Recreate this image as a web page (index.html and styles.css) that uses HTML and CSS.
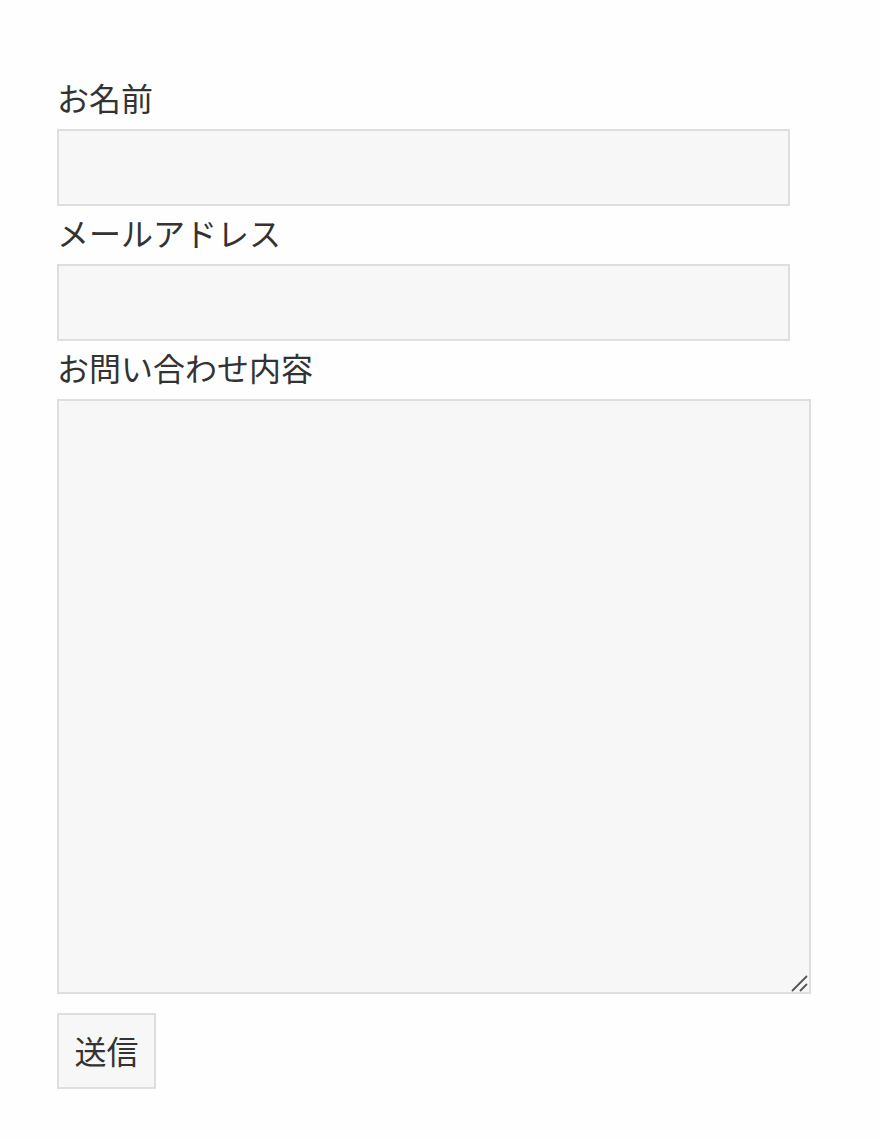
FILE: index.html
```html
<!DOCTYPE html>
<html lang="ja">
<head>
<meta charset="utf-8">
<title>お問い合わせ</title>
<link rel="stylesheet" href="styles.css">
</head>
<body>
<form class="contact-form">
  <label class="field-label" for="name">お名前</label>
  <input class="field-input" type="text" id="name">
  <label class="field-label" for="email">メールアドレス</label>
  <input class="field-input" type="email" id="email">
  <label class="field-label" for="message">お問い合わせ内容</label>
  <div class="textarea-wrap">
    <textarea class="field-textarea" id="message"></textarea>
    <svg class="grip" width="18" height="18" viewBox="0 0 18 18" aria-hidden="true">
      <path d="M2.5 16.5 L16.5 2.5 M10.5 16.5 L16.5 10.5" stroke="#555" stroke-width="1.8" stroke-linecap="round" fill="none"/>
    </svg>
  </div>
  <button class="submit-btn" type="submit">送信</button>
</form>
</body>
</html>
```

FILE: styles.css
```css
html, body {
  margin: 0;
  padding: 0;
  background: #fefefe;
}
* {
  box-sizing: border-box;
}
.contact-form {
  display: flex;
  flex-direction: column;
  align-items: flex-start;
  padding: 71px 0 0 57px;
  font-family: "Noto Sans CJK JP", "Noto Sans", sans-serif;
  color: #333;
}
.field-label {
  display: block;
  font-size: 32px;
  line-height: 52px;
  height: 58px;
  padding-bottom: 6px;
}
.field-input,
.field-textarea,
.submit-btn {
  margin: 0;
  border: 2px solid #dedede;
  background: #f7f7f7;
  font-family: inherit;
  font-size: 32px;
  color: #333;
  border-radius: 0;
  outline: none;
}
.field-input {
  width: 733px;
  height: 77px;
  padding: 0 12px;
}
.textarea-wrap {
  position: relative;
  width: 754px;
  height: 595px;
}
.field-textarea {
  width: 100%;
  height: 100%;
  padding: 8px 12px;
  display: block;
  resize: none;
}
.grip {
  position: absolute;
  right: 3px;
  bottom: 2px;
  pointer-events: none;
}
.submit-btn {
  margin-top: 19px;
  width: 99px;
  height: 76px;
  padding: 0 0 3px;
  line-height: 1;
}
```
